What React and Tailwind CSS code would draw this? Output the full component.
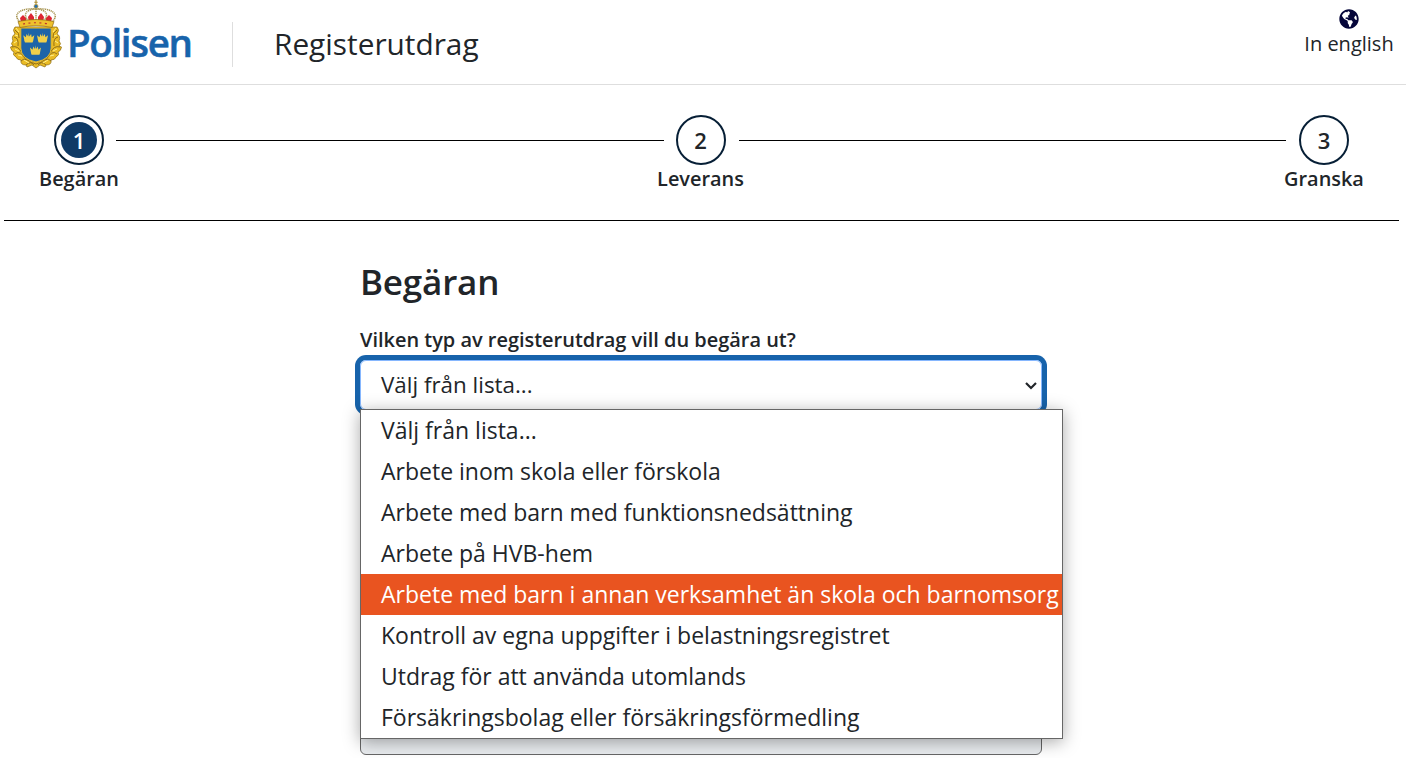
import React from 'react';
import { FaGlobeAmericas } from 'react-icons/fa';

const options = [
  'Välj från lista...',
  'Arbete inom skola eller förskola',
  'Arbete med barn med funktionsnedsättning',
  'Arbete på HVB-hem',
  'Arbete med barn i annan verksamhet än skola och barnomsorg',
  'Kontroll av egna uppgifter i belastningsregistret',
  'Utdrag för att använda utomlands',
  'Försäkringsbolag eller försäkringsförmedling',
];

const highlighted = 4;

function SmallCrown({ x, y }) {
  return (
    <g transform={`translate(${x} ${y})`} fill="#f0d04a">
      <path d="M1.2 8.5 L0 2.4 L2.6 4.5 L3.2 1.2 L5 3.8 L5.5 0 L6 3.8 L7.8 1.2 L8.4 4.5 L11 2.4 L9.8 8.5 Z" />
      <rect x="1.4" y="7.2" width="8.2" height="2.4" rx="0.6" />
    </g>
  );
}

function Crest() {
  return (
    <svg className="h-[70px] w-[52px] shrink-0" viewBox="0 0 52 70" aria-hidden="true">
      <path
        d="M9 27 L5 27 Q2 30 5 34 Q1 36 3 41 Q0 44 3 46 L0.5 47 Q1 51 4 52 Q2 55 6 57 Q7 60 11 60 Q10 65 16 65 L17 67 L22 65 L26 68 L30 65 L35 67 L36 65 Q42 65 41 60 Q45 60 46 57 Q50 55 48 52 Q51 51 51.5 47 L49 46 Q52 44 49 41 Q51 36 47 34 Q50 30 47 27 L43 27 Z"
        fill="#eabb24"
        stroke="#8d6d17"
        strokeWidth="0.7"
      />
      <g fill="none">
        <path d="M5 30 Q10 33 9 38 M4 37 Q9 38 8 46 M2 47 Q8 45 12 53 M5 54 Q10 49 16 60 M11 61 Q15 56 24 65 M47 30 Q42 33 43 38 M48 37 Q43 38 44 46 M50 47 Q44 45 40 53 M47 54 Q42 49 36 60 M41 61 Q37 56 28 65 M16 65 Q20 61 26 64 Q32 61 36 65" stroke="#85661a" strokeWidth="0.9" />
        <path d="M6 28 l3 4 M5 35 l3 1 M4 43 l3 -2 M5 49 l4 2 M8 55 l4 1 M14 60 l5 3 M46 28 l-3 4 M47 35 l-3 1 M48 43 l-3 -2 M47 49 l-4 2 M44 55 l-4 1 M38 60 l-5 3" stroke="#fff08c" strokeWidth="1" />
      </g>
      <path d="M10.8 28 H41.2 V48 Q41 59 26 62 Q11 59 10.8 48 Z" fill="#1d64a8" stroke="#e8ba2b" strokeWidth="1" />
      <SmallCrown x={13.3} y={32.8} />
      <SmallCrown x={27} y={32.8} />
      <SmallCrown x={20} y={45.2} />
      <path d="M11 22 Q5 16 10 11 Q16 7 26 8 Q36 7 42 11 Q47 16 41 22 Z" fill="#fff" />
      <path d="M11 22 L10 18 L13 15 L16 18 V22 Z M19 22 L18 17 L21 13 L24 17 V22 Z M28 22 V17 L31 13 L34 17 L33 22 Z M36 22 V18 L39 15 L42 18 L41 22 Z" fill="#dd2531" />
      <g fill="none" stroke="#a6934f" strokeWidth="1.5" strokeDasharray="1.2 0.7">
        <path d="M10 22 Q4 16 9 12 Q15 8 26 9" />
        <path d="M42 22 Q48 16 43 12 Q37 8 26 9" />
        <path d="M18 21 Q13 14 18 11 Q22 9 26 9" />
        <path d="M34 21 Q39 14 34 11 Q30 9 26 9" />
        <path d="M26 9 V21" />
      </g>
      <path d="M8 21.5 Q26 17.5 44 21.5 L42 27.5 Q26 24 10 27.5 Z" fill="#efc12d" stroke="#8d6a12" strokeWidth="0.7" />
      <path d="M13 24 Q26 21.5 39 24" fill="none" stroke="#bd342c" strokeWidth="1.1" strokeDasharray="2 3.5" />
      <circle cx="26" cy="6.3" r="2" fill="#2870ae" stroke="#c59d30" strokeWidth="0.7" />
      <path d="M26 0 V4.5 M24.3 2.3 H27.7" stroke="#ad8c2d" strokeWidth="1.1" />
    </svg>
  );
}

function Step({ number, label, active }) {
  return (
    <div className="flex w-[90px] shrink-0 flex-col items-center">
      <div className="flex size-[50px] items-center justify-center rounded-full border-2 border-[#071f36]">
        <div className={active
          ? 'flex size-9 items-center justify-center rounded-full bg-[#0f3a66] text-[22px] font-semibold text-white'
          : 'flex size-9 items-center justify-center rounded-full text-[22px] font-semibold text-[#212529]'}>
          {number}
        </div>
      </div>
      <div className="text-[19.9px] leading-[28px] font-semibold">{label}</div>
    </div>
  );
}

export default function App() {
  return (
    <div className="h-[758px] w-full overflow-hidden bg-white font-['Open_Sans','Noto_Sans',sans-serif] text-[#212529]">
      <header className="flex h-[85px] justify-between border-b border-[#dedede]">
        <div className="flex pl-[10px]">
          <Crest />
          <div className="mt-[13px] ml-[5px] w-[123px] text-[38.5px] leading-[58px] font-semibold tracking-[-1.35px] text-[#1763ab] [-webkit-text-stroke:0.5px_#1763ab]">Polisen</div>
          <div className="mt-[22px] ml-[42px] h-[45px] w-px bg-[#dedede]" />
          <h1 className="mt-[22px] ml-[41px] text-[29.8px] leading-[44px]">Registerutdrag</h1>
        </div>
        <div className="mr-[12px] flex w-[90px] flex-col items-center pt-[9px]">
          <FaGlobeAmericas className="size-5 text-[#05063a]" />
          <span className="text-[20px] leading-[30px] whitespace-nowrap">In english</span>
        </div>
      </header>

      <nav className="mr-[7px] ml-1 flex h-[136px] border-b border-black pt-[30px] pr-[30px] pl-[30px]">
        <Step number="1" label="Begäran" active />
        <div className="mt-[25px] mr-[-8px] ml-[-8px] h-px flex-1 bg-black" />
        <Step number="2" label="Leverans" />
        <div className="mt-[25px] mr-[-7px] ml-[-7px] h-px flex-1 bg-black" />
        <Step number="3" label="Granska" />
      </nav>

      <main className="ml-[360px] w-[682px] pt-[36px]">
        <h2 className="text-[35px] leading-[50px] font-semibold tracking-[-0.2px]">Begäran</h2>
        <label className="mt-[18px] block text-[19.95px] leading-[30px] font-semibold whitespace-nowrap">Vilken typ av registerutdrag vill du begära ut?</label>
        <div className="relative mt-[5px] h-[395px]">
          <div className="flex h-[50px] items-center justify-between rounded-md border border-[#86b7fe] pr-[3px] pl-5 ring-[5px] ring-[#1763ab]">
            <span className="text-[22.4px] leading-[32px]">Välj från lista...</span>
            <svg className="size-[14px]" viewBox="0 0 14 14" fill="none" stroke="#212529" strokeWidth="2.2">
              <path d="M2 5 L7 10 L12 5" />
            </svg>
          </div>
          <div className="mt-[310px] h-[35px] rounded-md border border-[#666] bg-[#e9ecef]" />
          <ul className="absolute top-[49px] left-0 w-[703px] border border-[#666] bg-white shadow-[0_3px_16px_rgba(0,0,0,0.34)]">
            {options.map((label, i) => (
              <li key={label} className={i === highlighted
                ? 'flex h-[41px] items-center bg-[#e95420] pl-5 text-[23px] whitespace-nowrap text-white'
                : 'flex h-[41px] items-center pl-5 text-[23px] whitespace-nowrap'}>
                {label}
              </li>
            ))}
          </ul>
        </div>
      </main>
    </div>
  );
}
